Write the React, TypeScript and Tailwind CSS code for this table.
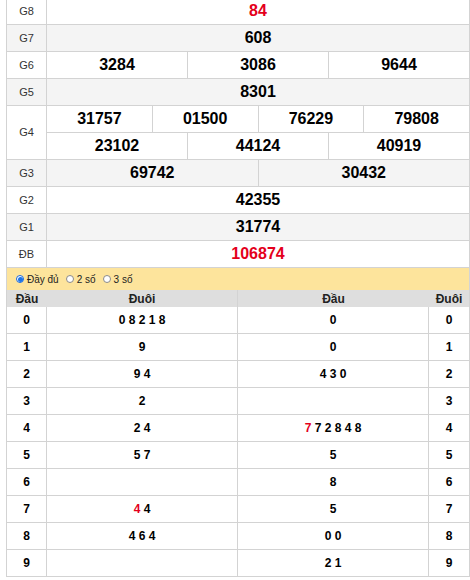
const prizes = [
  { label: "G8", lines: [["84"]], red: true },
  { label: "G7", lines: [["608"]] },
  { label: "G6", lines: [["3284", "3086", "9644"]] },
  { label: "G5", lines: [["8301"]] },
  {
    label: "G4",
    lines: [
      ["31757", "01500", "76229", "79808"],
      ["23102", "44124", "40919"],
    ],
  },
  { label: "G3", lines: [["69742", "30432"]] },
  { label: "G2", lines: [["42355"]] },
  { label: "G1", lines: [["31774"]] },
  { label: "ĐB", lines: [["106874"]], red: true },
];

// [digits, first digit red?]
const dau: [string, boolean][] = [
  ["0 8 2 1 8", false],
  ["9", false],
  ["9 4", false],
  ["2", false],
  ["2 4", false],
  ["5 7", false],
  ["", false],
  ["4 4", true],
  ["4 6 4", false],
  ["", false],
];

const duoi: [string, boolean][] = [
  ["0", false],
  ["0", false],
  ["4 3 0", false],
  ["", false],
  ["7 7 2 8 4 8", true],
  ["5", false],
  ["8", false],
  ["5", false],
  ["0 0", false],
  ["2 1", false],
];

function Digits({ value, red }: { value: string; red: boolean }) {
  if (!red) return <span>{value}</span>;
  return (
    <span className="whitespace-pre">
      <span className="text-[#e4001b]">{value.slice(0, 1)}</span>
      {value.slice(1)}
    </span>
  );
}

function Radio({ checked, label }: { checked?: boolean; label: string }) {
  return (
    <label className="flex items-center gap-[3px]">
      {checked ? (
        <span className="w-[8px] h-[8px] rounded-full border border-[#1a66d9] bg-white flex items-center justify-center">
          <span className="w-[5px] h-[5px] rounded-full bg-[#1a73e8]" />
        </span>
      ) : (
        <span className="w-[8px] h-[8px] rounded-full border border-[#8a8a8a] bg-white" />
      )}
      <span>{label}</span>
    </label>
  );
}

export default function App() {
  return (
    <main className="w-[470px] h-[580px] overflow-hidden bg-white font-['Liberation_Sans',Arial,sans-serif]">
      <div className="ml-[6px] -mt-[2px] w-[464px] border-l border-r border-[#d3d3d3]">
        {prizes.map((p, idx) => (
          <div
            key={p.label}
            className={`flex border-b border-[#d3d3d3] ${idx % 2 === 1 ? "bg-[#f4f4f4]" : "bg-white"}`}
          >
            <div className="w-[40px] shrink-0 border-r border-[#d3d3d3] flex items-center justify-center text-[11px] text-[#333]">
              {p.label}
            </div>
            <div className="flex-1 flex flex-col">
              {p.lines.map((line, i) => (
                <div
                  key={i}
                  className={`flex ${i < p.lines.length - 1 ? "h-[27px] border-b border-[#d3d3d3]" : "h-[26px]"}`}
                >
                  {line.map((n, j) => (
                    <div
                      key={n}
                      className={`flex-1 flex items-center justify-center text-[16px] font-bold ${j < line.length - 1 ? "border-r border-[#d3d3d3]" : ""} ${p.red ? "text-[#e4001b]" : "text-black"}`}
                    >
                      {n}
                    </div>
                  ))}
                </div>
              ))}
            </div>
          </div>
        ))}

        <div className="h-[22px] bg-[#fde49c] flex items-center gap-[7px] pl-[9px] text-[10px] text-[#222]">
          <Radio checked label="Đầy đủ" />
          <Radio label="2 số" />
          <Radio label="3 số" />
        </div>

        <div className="flex">
          <div className="w-1/2 border-r border-[#d3d3d3]">
            <div className="h-[17px] bg-[#dedede] flex text-[12px] font-bold text-[#222]">
              <div className="w-[40px] flex items-center justify-center">Đầu</div>
              <div className="flex-1 flex items-center justify-center">Đuôi</div>
            </div>
            {dau.map(([v, red], i) => (
              <div key={i} className="h-[27px] flex border-b border-[#d3d3d3] text-[12px] font-bold text-black">
                <div className="w-[40px] border-r border-[#d3d3d3] flex items-center justify-center">{i}</div>
                <div className="flex-1 flex items-center justify-center">
                  <Digits value={v} red={red} />
                </div>
              </div>
            ))}
          </div>
          <div className="w-1/2">
            <div className="h-[17px] bg-[#dedede] flex text-[12px] font-bold text-[#222]">
              <div className="flex-1 flex items-center justify-center">Đầu</div>
              <div className="w-[40px] flex items-center justify-center">Đuôi</div>
            </div>
            {duoi.map(([v, red], i) => (
              <div key={i} className="h-[27px] flex border-b border-[#d3d3d3] text-[12px] font-bold text-black">
                <div className="flex-1 border-r border-[#d3d3d3] flex items-center justify-center">
                  <Digits value={v} red={red} />
                </div>
                <div className="w-[40px] flex items-center justify-center">{i}</div>
              </div>
            ))}
          </div>
        </div>
      </div>
    </main>
  );
}
